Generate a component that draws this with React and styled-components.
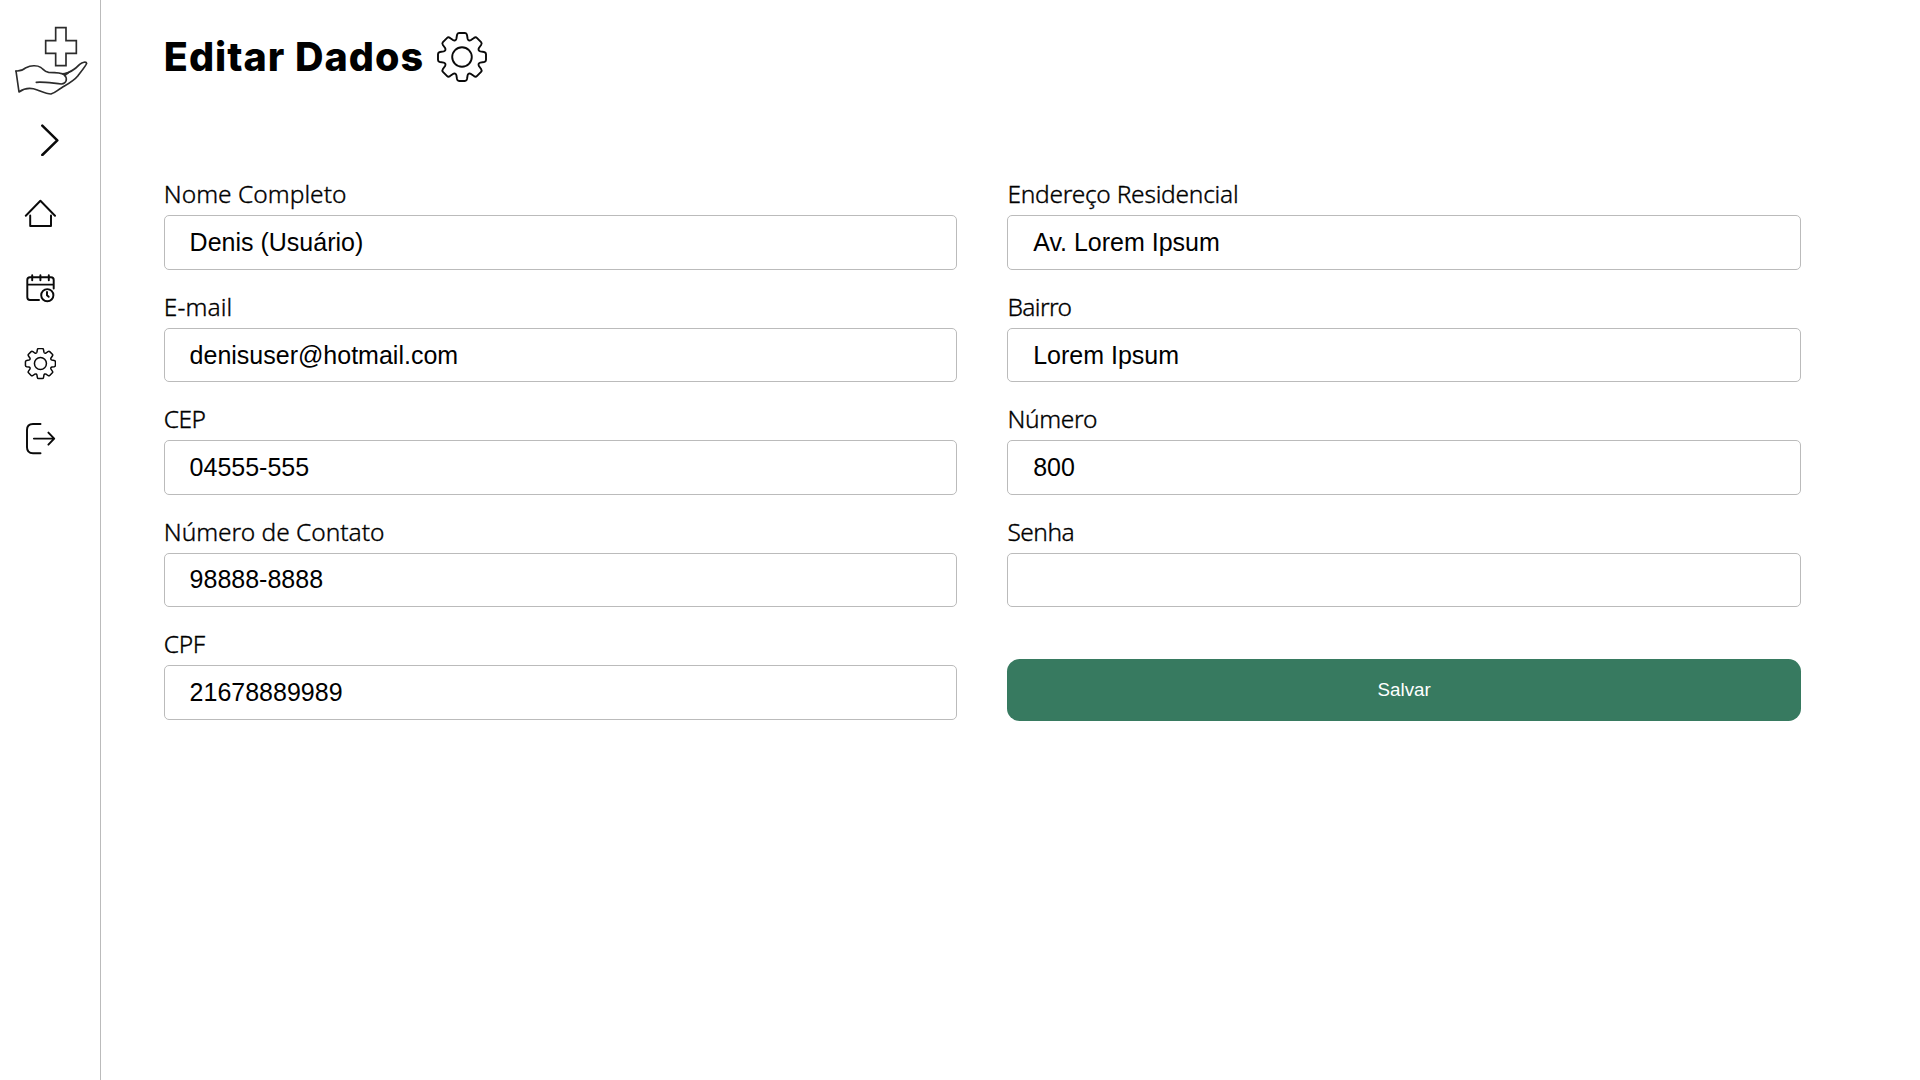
import React from "react";
import styled, { createGlobalStyle } from "styled-components";

const GlobalStyle = createGlobalStyle`
  *, *::before, *::after { box-sizing: border-box; }
  body { margin: 0; background: #fff; color: #000; overflow: hidden; }
`;

const Page = styled.div`
  display: flex;
  height: 100vh;
  background: #fff;
`;

const Sidebar = styled.aside`
  display: flex;
  flex-direction: column;
  flex: none;
  width: 101px;
  padding-top: 10.5px;
  border-right: 1px solid #bbb;
`;

const Svg = styled.svg`
  display: block;
  flex: none;
  fill: none;
  stroke: ${(p) => p.$color || "#0a0a0a"};
  stroke-width: ${(p) => p.$stroke || 1.95};
  stroke-linecap: round;
  stroke-linejoin: round;
`;

const Toggle = styled.a`
  display: block;
  margin: 13.5px 0 42px 34px;
`;

const Nav = styled.nav`
  display: flex;
  flex-direction: column;
  gap: 43px;
  padding-left: 24px;
`;

const NavLink = styled.a`
  display: block;
  width: 32px;
  height: 32px;
`;

const Main = styled.main`
  flex: 1;
  padding: 27px 119px 0 62.8px;
`;

const Header = styled.header`
  display: flex;
  align-items: center;
  gap: 12px;
  height: 60px;
  margin-bottom: 95.4px;
`;

const Title = styled.h1`
  margin: 0;
  width: 261.2px;
  white-space: nowrap;
  font: 800 39.5px/60px Inter, sans-serif;
  letter-spacing: 1px;
`;

const Form = styled.form`
  display: grid;
  grid-template-columns: 1fr 1fr;
  gap: 50px;
`;

const Column = styled.div`
  display: flex;
  flex-direction: column;
  gap: 24.8px;
`;

const Field = styled.label`
  display: flex;
  flex-direction: column;
`;

const Label = styled.span`
  height: 33px;
  font: 300 24.5px/24px "Noto Sans", sans-serif;
  letter-spacing: ${(p) => p.$spacing}px;
  -webkit-text-stroke: 0.35px #000;
  white-space: nowrap;
`;

const Input = styled.input`
  width: 100%;
  height: 54.6px;
  padding: 0 24.8px;
  border: 1px solid #bbb;
  border-radius: 5px;
  outline: none;
  background: #fff;
  color: #000;
  font: 400 25px "Liberation Sans", Arial, sans-serif;
`;

const SaveButton = styled.button`
  height: 62px;
  margin-top: 27px;
  padding: 0;
  border: 0;
  border-radius: 12.5px;
  background: #377a60;
  color: #fff;
  font: 400 18.75px "Liberation Sans", Arial, sans-serif;
`;

// Eight-tooth outline, one tooth rotated around the centre.
const gearPath = (() => {
  const at = (i, x, y) => {
    const a = (i * Math.PI) / 4;
    return `${(x * Math.cos(a) - y * Math.sin(a)).toFixed(2)} ${(x * Math.sin(a) + y * Math.cos(a)).toFixed(2)}`;
  };
  let d = `M${at(0, -5.6, -18.3)}`;
  for (let i = 0; i < 8; i++) {
    d += `L${at(i, -5, -22)}Q${at(i, -4.6, -24)} ${at(i, -3, -24)}L${at(i, 3, -24)}`;
    d += `Q${at(i, 4.6, -24)} ${at(i, 5, -22)}L${at(i, 5.6, -18.3)}`;
    d += `Q${at(i, 6.5, -15.7)} ${at(i + 1, -5.6, -18.3)}`;
  }
  return d + "Z";
})();

const Gear = ({ width, height = width, view, stroke, hub }) => (
  <Svg width={width} height={height} viewBox={view} $stroke={stroke}>
    <path d={gearPath} />
    <circle r={hub} />
  </Svg>
);

const Logo = () => (
  <Svg width="100" height="100" viewBox="0 0 300 300" $stroke={5} $color="#2c2c2c">
    <path strokeLinejoin="miter" d="M167 50H198V89H229V127H198V164H167V127H137V89H167Z" />
    <path d="M48 180L57 243C74 231 94 230 112 237C130 244 140 249 153 249C166 245 170 239 185 230C205 218 222 209 234 194C244 181 259 162 260 157C259 151 247 153 239 160C224 176 212 185 190 189" />
    <path d="M48 180C62 181 70 177 78 170C92 163 111 162 122 169C131 175 133 183 146 184C165 184 184 184 192 191C204 202 200 217 184 219C160 217 126 211 109 214" />
    <path fill="#2c2c2c" strokeWidth="1" d="M186 187C200 187 208 182 217 176C209 185 202 191 196 194Z" />
  </Svg>
);

const Icon = ({ children, stroke }) => (
  <Svg width="32" height="32" viewBox="0 0 32 32" $stroke={stroke}>
    {children}
  </Svg>
);

// [label, value, label letter spacing, input type]
const contact = [
  ["Nome Completo", "Denis (Usuário)", 0.02],
  ["E-mail", "denisuser@hotmail.com", 0.1],
  ["CEP", "04555-555", -0.5],
  ["Número de Contato", "98888-8888", -0.02],
  ["CPF", "21678889989", -0.4],
];

const address = [
  ["Endereço Residencial", "Av. Lorem Ipsum", -0.25],
  ["Bairro", "Lorem Ipsum", -0.6],
  ["Número", "800", -0.3],
  ["Senha", "", -0.5, "password"],
];

const Fields = ({ items }) =>
  items.map(([label, value, spacing, type = "text"]) => (
    <Field key={label}>
      <Label $spacing={spacing}>{label}</Label>
      <Input type={type} defaultValue={value} />
    </Field>
  ));

export default function App() {
  return (
    <Page>
      <GlobalStyle />
      <Sidebar>
        <Logo />
        <Toggle>
          <Icon stroke={2.5}>
            <path d="M8.3 1.7L23.3 16.4L8.3 31" />
          </Icon>
        </Toggle>
        <Nav>
          <NavLink>
            <Icon>
              <path d="M1.8 17.8L16.4 2.8L31 17.8M6.2 17.5V28H27V17.5" />
            </Icon>
          </NavLink>
          <NavLink>
            <Icon>
              <path d="M15 27H6Q3.3 27 3.3 24.3V7Q3.3 4.3 6 4.3H27Q29.7 4.3 29.7 7V15.5M3.3 11.6H29.7M8.2 2.3V7.2M16.4 2.3V7.2M24.8 2.3V7.2" />
              <circle cx="23.3" cy="22.2" r="6.1" />
              <path d="M23 18.9V22.3L24.7 23.8" />
            </Icon>
          </NavLink>
          <NavLink>
            <Gear width={32} view="-26.3 -24.9 51.2 51.2" stroke={2.4} hub={9.6} />
          </NavLink>
          <NavLink>
            <Icon>
              <path d="M16.5 1H9Q3 1 3 7V24.3Q3 30.3 9 30.3H16.5M9.9 15.6H30M24.4 9.6L30.2 15.6L24.4 21.6" />
            </Icon>
          </NavLink>
        </Nav>
      </Sidebar>
      <Main>
        <Header>
          <Title>Editar Dados</Title>
          <Gear width={50} view="-25 -25 50 50" stroke={1.9} hub={9.8} />
        </Header>
        <Form>
          <Column>
            <Fields items={contact} />
          </Column>
          <Column>
            <Fields items={address} />
            <SaveButton type="button">Salvar</SaveButton>
          </Column>
        </Form>
      </Main>
    </Page>
  );
}
